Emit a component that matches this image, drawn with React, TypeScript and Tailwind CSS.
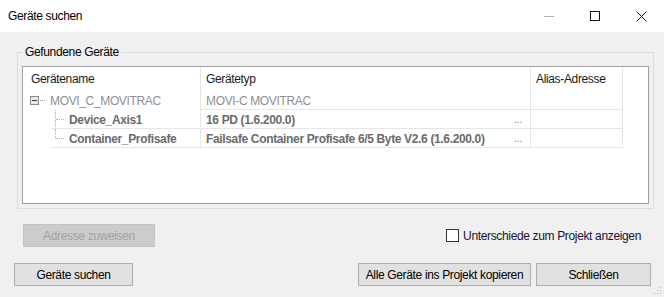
import React from "react"

const font = { fontFamily: '"Liberation Sans", Arial, sans-serif' }

function TitleBar() {
  return (
    <div className="flex h-[32px] items-center bg-white">
      <span className="ml-[8px] text-[12px] text-[#000]">Geräte suchen</span>
      <div className="ml-auto flex h-full items-center">
        <div className="flex h-full w-[46px] items-center justify-center">
          <div className="h-px w-[10px] bg-[#b0b0b0]" />
        </div>
        <div className="flex h-full w-[46px] items-center justify-center">
          <div className="h-[10px] w-[10px] border border-[#111]" />
        </div>
        <div className="flex h-full w-[46px] items-center justify-center">
          <svg width="11" height="11" viewBox="0 0 11 11">
            <path d="M0.5 0.5 L10.5 10.5 M10.5 0.5 L0.5 10.5" stroke="#111" strokeWidth="1" />
          </svg>
        </div>
      </div>
    </div>
  )
}

function Row({
  name,
  typ,
  level,
  bold,
  last,
}: {
  name: string
  typ: string
  level: number
  bold?: boolean
  last?: boolean
}) {
  const txt = bold ? "font-bold text-[#6b6b6b]" : "text-[#8f8f8f]"
  return (
    <div className="flex h-[19px] whitespace-nowrap text-[12px]">
      <div className="relative flex w-[177px] items-center">
        {level === 0 ? (
          <>
            <div className="ml-[7px] flex h-[9px] w-[9px] items-center justify-center border border-[#8a8a8a] bg-[#e8e8e8]">
              <div className="h-px w-[5px] bg-[#333]" />
            </div>
            <div className="ml-px w-[5px] border-t border-dotted border-[#a0a0a0]" />
            <span className={`ml-[5px] ${txt}`}>{name}</span>
          </>
        ) : (
          <>
            <div
              className={`absolute left-[32px] top-0 w-px border-l border-dotted border-[#b0b0b0] ${
                last ? "h-[10px]" : "h-full"
              }`}
            />
            <div className="ml-[33px] w-[8px] border-t border-dotted border-[#b0b0b0]" />
            <span className={`ml-[5px] ${txt}`}>{name}</span>
            <div className="absolute bottom-0 left-[29px] right-0 h-px bg-[#e6e6e6]" />
          </>
        )}
      </div>
      <div className="relative flex w-[330px] items-center border-l border-[#e6e6e6] pl-[5px]">
        <span className={txt}>{typ}</span>
        {level > 0 && <span className="ml-auto mr-[8px] text-[11px] text-[#8a8a8a]">...</span>}
        <div className="absolute bottom-0 left-0 right-0 h-px bg-[#e6e6e6]" />
      </div>
      <div className="relative w-[93px] border-x border-[#e6e6e6]">
        <div className="absolute bottom-0 left-0 right-0 h-px bg-[#e6e6e6]" />
      </div>
    </div>
  )
}

function Button({ label, w, disabled }: { label: string; w: string; disabled?: boolean }) {
  return (
    <div
      className={`flex h-[23px] items-center justify-center whitespace-nowrap border text-[12px] ${w} ${
        disabled
          ? "border-[#c4c4c4] bg-[#cccccc] text-[#a2a2a2]"
          : "border-[#adadad] bg-[#e1e1e1] text-[#000]"
      }`}
    >
      {label}
    </div>
  )
}

export default function App() {
  return (
    <div className="relative h-[297px] w-[664px] overflow-hidden bg-[#f0f0f0] tracking-[-0.35px]" style={font}>
      <TitleBar />

      {/* Gruppe */}
      <div className="relative ml-[17px] mt-[20px] h-[157px] w-[637px] border border-[#dcdcdc] pl-[4px] pt-[13px]">
        <span className="absolute left-[5px] top-[-9px] bg-[#f0f0f0] px-[2px] text-[12px] leading-[16px] text-[#000]">
          Gefundene Geräte
        </span>
        <div className="h-[138px] w-[627px] border border-[#a0a0a0] bg-white">
          <div className="flex h-[24px] text-[12px] text-[#1a1a1a]">
            <div className="flex w-[177px] items-center pl-[8px]">Gerätename</div>
            <div className="flex w-[330px] items-center border-l border-[#e6e6e6] pl-[5px]">Gerätetyp</div>
            <div className="flex w-[93px] items-center border-x border-[#e6e6e6] pl-[5px]">Alias-Adresse</div>
          </div>
          <Row name="MOVI_C_MOVITRAC" typ="MOVI-C MOVITRAC" level={0} />
          <Row name="Device_Axis1" typ="16 PD (1.6.200.0)" level={1} bold />
          <Row
            name="Container_Profisafe"
            typ="Failsafe Container Profisafe 6/5 Byte V2.6 (1.6.200.0)"
            level={1}
            bold
            last
          />
        </div>
      </div>

      <div className="mt-[15px] flex items-center">
        <div className="ml-[23px]">
          <Button label="Adresse zuweisen" w="w-[132px]" disabled />
        </div>
        <div className="ml-auto mr-[23px] flex items-center">
          <div className="h-[13px] w-[13px] border border-[#333] bg-white" />
          <span className="ml-[4px] whitespace-nowrap text-[12px] text-[#1a1030]">Unterschiede zum Projekt anzeigen</span>
        </div>
      </div>

      <div className="mt-[16px] flex items-center">
        <div className="ml-[14px]">
          <Button label="Geräte suchen" w="w-[119px]" />
        </div>
        <div className="ml-auto flex gap-[5px] pr-[13px]">
          <Button label="Alle Geräte ins Projekt kopieren" w="w-[173px]" />
          <Button label="Schließen" w="w-[115px]" />
        </div>
      </div>

      {/* Größe ändern */}
      <svg className="absolute bottom-[2px] right-[2px]" width="8" height="8" viewBox="0 0 8 8">
        <rect x="6" y="0" width="1" height="1" fill="#b8b8b8" />
        <rect x="3" y="3" width="1" height="1" fill="#b8b8b8" />
        <rect x="6" y="3" width="1" height="1" fill="#b8b8b8" />
        <rect x="0" y="6" width="1" height="1" fill="#b8b8b8" />
        <rect x="3" y="6" width="1" height="1" fill="#b8b8b8" />
        <rect x="6" y="6" width="1" height="1" fill="#b8b8b8" />
      </svg>
    </div>
  )
}
